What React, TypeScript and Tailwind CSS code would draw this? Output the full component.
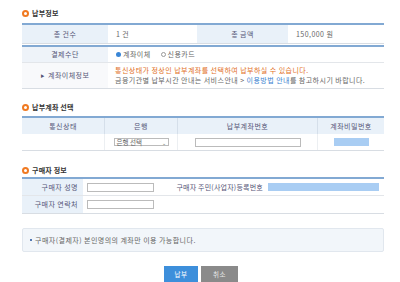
import React from "react";

const font = { fontFamily: '"Noto Sans CJK KR", "Noto Sans", sans-serif' };

function Title({ children }: { children: React.ReactNode }) {
  return (
    <div className="flex h-[12px] items-center gap-[3px]">
      <span className="box-border inline-block h-[7px] w-[7px] rounded-full border-[2px] border-[#f07a22] bg-white" />
      <span className="text-[7px] font-bold leading-none tracking-[0.2px] text-[#333]">{children}</span>
    </div>
  );
}

export default function App() {
  return (
    <div style={font} className="h-[282px] w-[400px] bg-white text-[7px] leading-none tracking-[0.45px] text-[#666]">
      <div className="ml-[22px] w-[362px] pt-[7px]">
        <Title>납부정보</Title>
        {/* Table 1 row 1 */}
        <div className="mt-[4px] border-t-[2px] border-[#82a9d3]">
          <div className="grid h-[19px] grid-cols-[86px_89px_91px_1fr] border-b border-[#d8dde3]">
            <div className="flex items-center justify-center bg-[#e9f1f9] text-[#557]">총 건수</div>
            <div className="flex items-center pl-[8px]">1 건</div>
            <div className="flex items-center justify-center bg-[#e9f1f9] text-[#557]">총 금액</div>
            <div className="flex items-center pl-[8px]">150,000 원</div>
          </div>
        </div>
        {/* Table 1 second part */}
        <div className="mt-[1px] border-t-[2px] border-[#82a9d3]">
          <div className="grid h-[16px] grid-cols-[86px_1fr] border-b border-[#e3e6ea]">
            <div className="flex items-center justify-center bg-[#eef3f9] text-[#557]">결제수단</div>
            <div className="flex items-center gap-[10px] pl-[8px]">
              <span className="flex items-center gap-[2px]">
                <span className="box-border inline-block h-[5px] w-[5px] rounded-full bg-[#3a86d6]" />
                계좌이체
              </span>
              <span className="flex items-center gap-[2px]">
                <span className="box-border inline-block h-[5px] w-[5px] rounded-full border border-[#999] bg-white" />
                신용카드
              </span>
            </div>
          </div>
          <div className="grid h-[26px] grid-cols-[86px_1fr] border-b border-[#d8dde3]">
            <div className="flex items-center justify-center gap-[3px] bg-[#f8f9fb] text-[#557]">
              <span className="text-[4px] text-[#557]">▶</span>계좌이체정보
            </div>
            <div className="flex flex-col justify-center gap-[3px] pl-[7px]">
              <div className="text-[#e2701e]">통신상태가 정상인 납부계좌를 선택하여 납부하실 수 있습니다.</div>
              <div>
                금융기관별 납부시간 안내는 서비스안내 &gt; <span className="text-[#3a7fd0]">이용방법 안내</span>를 참고하시기 바랍니다.
              </div>
            </div>
          </div>
        </div>

        {/* Section 2 */}
        <div className="mt-[12px]">
          <Title>납부계좌 선택</Title>
        </div>
        <div className="mt-[3px] border-t-[2px] border-[#82a9d3]">
          <div className="grid h-[16px] grid-cols-[83px_73px_140px_1fr] bg-[#e9f1f9] text-[#557]">
            <div className="flex items-center justify-center border-r border-[#d5dfea]">통신상태</div>
            <div className="flex items-center justify-center border-r border-[#d5dfea]">은행</div>
            <div className="flex items-center justify-center border-r border-[#d5dfea]">납부계좌번호</div>
            <div className="flex items-center justify-center">계좌비밀번호</div>
          </div>
          <div className="grid h-[17px] grid-cols-[83px_73px_140px_1fr] border-b border-[#d8dde3]">
            <div className="border-r border-[#eceff2]" />
            <div className="flex items-center justify-center border-r border-[#eceff2]">
              <div className="flex h-[8px] w-[55px] items-center justify-between border border-[#bbb] px-[2px] text-[6.5px] tracking-normal">
                <span>은행 선택</span>
                <span className="text-[5px]">⌄</span>
              </div>
            </div>
            <div className="flex items-center justify-center border-r border-[#eceff2]">
              <div className="h-[9px] w-[106px] border border-[#bbb] bg-white" />
            </div>
            <div className="flex items-center justify-center">
              <div className="h-[8px] w-[35px] bg-[#a9cdf3]" />
            </div>
          </div>
        </div>

        {/* Section 3 */}
        <div className="mt-[13px]">
          <Title>구매자 정보</Title>
        </div>
        <div className="mt-[1px] border-t-[2px] border-[#82a9d3]">
          <div className="grid h-[17px] grid-cols-[61px_92px_91px_1fr] border-b border-[#e3e6ea]">
            <div className="flex items-center justify-end bg-[#e9f1f9] pr-[5px] text-[#557]">구매자 성명</div>
            <div className="flex items-center pl-[4px]">
              <div className="h-[9px] w-[67px] border border-[#bbb] bg-white" />
            </div>
            <div className="flex items-center justify-end whitespace-nowrap pr-[3px] tracking-[0.2px] text-[#557]">구매자 주민(사업자)등록번호</div>
            <div className="flex items-center pl-[2px]">
              <div className="h-[8px] w-[111px] bg-[#a9cdf3]" />
            </div>
          </div>
          <div className="grid h-[18px] grid-cols-[61px_1fr] border-b border-[#d8dde3]">
            <div className="flex items-center justify-end bg-[#e9f1f9] pr-[5px] text-[#557]">구매자 연락처</div>
            <div className="flex items-center pl-[4px]">
              <div className="h-[9px] w-[67px] border border-[#bbb] bg-white" />
            </div>
          </div>
        </div>

        {/* Info box */}
        <div className="mt-[14px] flex h-[24px] items-center gap-[3px] rounded-[2px] border border-[#e1e7ee] bg-[#f2f6fa] pl-[7px] text-[#666]">
          <span className="inline-block h-[2px] w-[2px] rounded-full bg-[#1f4f9a]" />
          구매자(결제자) 본인명의의 계좌만 이용 가능합니다.
        </div>

        {/* Buttons */}
        <div className="mt-[14px] flex justify-center gap-[3px] pr-[4px]">
          <div className="flex h-[16px] w-[34px] items-center justify-center bg-[#3d8fdb] text-[6.5px] text-white">납부</div>
          <div className="flex h-[16px] w-[37px] items-center justify-center bg-[#8a8a8a] text-[6.5px] text-[#e8e8e8]">취소</div>
        </div>
      </div>
    </div>
  );
}
